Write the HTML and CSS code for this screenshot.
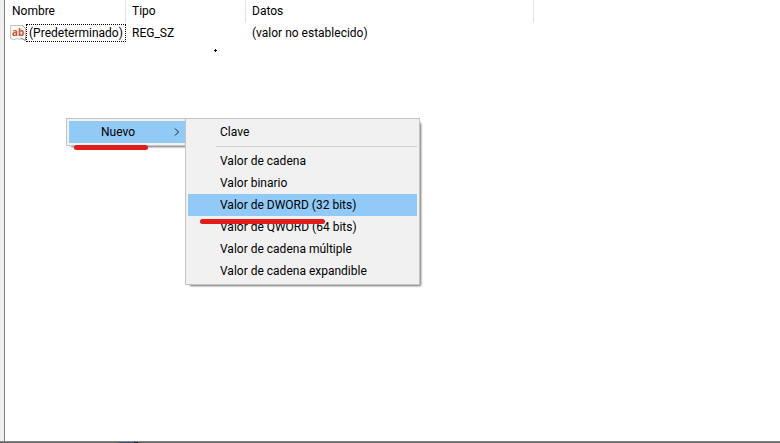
FILE: index.html
```html
<!DOCTYPE html>
<html lang="es">
<head>
  <meta charset="UTF-8">
  <title>Editor del Registro</title>
  <link rel="stylesheet" href="styles.css">
</head>
<body>
  <main class="panel">
    <table class="valores">
      <thead>
        <tr>
          <th class="col-nombre">Nombre</th>
          <th class="col-tipo">Tipo</th>
          <th class="col-datos">Datos</th>
          <th class="col-resto"></th>
        </tr>
      </thead>
      <tbody>
        <tr>
          <td class="celda-nombre">
            <div class="nombre">
              <svg class="icono" width="16" height="16" viewBox="0 0 16 16">
                <path d="M.5 .5H12.5L15.5 3.5V15.5L12.5 13.5L10 14.5L7 13.5L4 14.5L.5 13.5Z" fill="#f8f8f8" stroke="#c4c4c4"/>
                <path d="M12.5 .5L15.5 3.5M10.5 13L15.5 15.5V12" fill="none" stroke="#8c8c8c"/>
                <text x="2" y="11" class="ab">ab</text>
              </svg>
              <span class="foco">(Predeterminado)</span>
            </div>
          </td>
          <td>REG_SZ</td>
          <td>(valor no establecido)</td>
          <td></td>
        </tr>
      </tbody>
    </table>

    <svg class="puntero" width="3" height="3" viewBox="0 0 3 3">
      <path d="M1 0H2V1H3V2H2V3H1V2H0V1H1Z"/>
    </svg>

    <!-- Menú contextual -->
    <div class="menu menu-nuevo">
      <button class="opcion activa" type="button">Nuevo
        <svg class="flecha" width="6" height="8" viewBox="0 0 6 8">
          <path d="M1 0.5L4.5 4L1 7.5" fill="none" stroke="#222"/>
        </svg>
      </button>
      <span class="marca marca-nuevo"></span>
    </div>

    <div class="menu submenu">
      <button class="opcion" type="button">Clave</button>
      <hr class="separador">
      <button class="opcion" type="button">Valor de cadena</button>
      <button class="opcion" type="button">Valor binario</button>
      <button class="opcion activa" type="button">Valor de DWORD (32 bits)</button>
      <button class="opcion" type="button">Valor de QWORD (64 bits)</button>
      <button class="opcion" type="button">Valor de cadena múltiple</button>
      <button class="opcion" type="button">Valor de cadena expandible</button>
      <span class="marca marca-dword"></span>
    </div>
  </main>
  <footer class="borde">
    <svg width="24" height="1" viewBox="0 0 24 1">
      <rect width="16" height="1" fill="#3c5578"/>
      <rect x="16" width="4" height="1" fill="#1c1c1c"/>
    </svg>
  </footer>
</body>
</html>
```
FILE: styles.css
```css
* {
  box-sizing: border-box;
}

body {
  display: flex;
  flex-direction: column;
  min-height: 100vh;
  margin: 0;
  background-color: #efeff0;
  color: #000;
  font-family: "Segoe UI", Roboto, sans-serif;
  font-size: 12px;
  line-height: 16px;
}

.panel {
  position: relative;
  flex: 1;
  margin-left: 4px;
  border-left: 1px solid #828282;
  background-color: #fff;
}

.valores {
  width: 100%;
  table-layout: fixed;
  border-collapse: separate;
  border-spacing: 0;
}

th, td {
  padding: 0 0 0 6px;
  text-align: left;
  font-weight: normal;
  white-space: nowrap;
}

th {
  height: 23px;
  padding-bottom: 2px;
  border-right: 1px solid #e2e2e2;
}

td {
  height: 20px;
}

th.col-nombre {
  width: 121px;
  padding-left: 7px;
}

.col-tipo {
  width: 120px;
}

.col-datos {
  width: 288px;
}

.col-resto {
  border-right: none;
}

td.celda-nombre {
  padding-left: 5px;
}

.nombre {
  display: flex;
  align-items: center;
}

.icono {
  flex-shrink: 0;
}

.ab {
  font-family: "Open Sans", sans-serif;
  font-size: 10px;
  font-weight: bold;
  fill: #c8572c;
}

.foco {
  flex: 1;
  height: 18px;
  padding: 0 2px;
  border: 1px dotted #000;
}

.puntero {
  position: absolute;
  left: 209px;
  top: 49px;
}

.menu {
  position: absolute;
  top: 118px;
  padding: 2px;
  border: 1px solid #c4c4c4;
  background-color: #f1f1f1;
  box-shadow: 3px 3px 2px -2px #707070;
}

.menu-nuevo {
  left: 61px;
  width: 123px;
}

.submenu {
  left: 180px;
  width: 235px;
}

.opcion {
  display: flex;
  align-items: center;
  justify-content: space-between;
  width: 100%;
  height: 22px;
  padding: 0 6px 0 32px;
  border: none;
  background: none;
  color: #000;
  font: inherit;
  text-align: left;
  white-space: nowrap;
}

.activa {
  background-color: #91c9f7;
}

.separador {
  height: 1px;
  margin: 3px 0 3px 28px;
  border: none;
  background-color: #cfcfcf;
}

/* Subrayados rojos */
.marca {
  position: absolute;
  height: 5px;
  border-radius: 3px;
  background-color: #e21b1b;
}

.marca-nuevo {
  left: 7px;
  top: 26px;
  width: 74px;
}

.marca-dword {
  left: 14px;
  top: 100px;
  width: 125px;
}

.borde {
  height: 2px;
  padding-left: 118px;
  border-top: 1px solid #828282;
  background-color: #6a6668;
}

.borde svg {
  display: block;
}
```
